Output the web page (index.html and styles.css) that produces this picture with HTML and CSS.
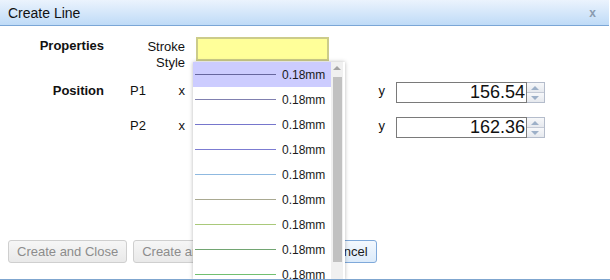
FILE: index.html
```html
<!DOCTYPE html>
<html lang="en">
<head>
    <meta charset="UTF-8">
    <title>Create Line</title>
    <link rel="stylesheet" href="styles.css">
</head>
<body>
    <div class="dialog">
        <div class="titlebar">
            <span class="title">Create Line</span>
            <span class="close">x</span>
        </div>

        <div class="content">
            <div class="form">
                <div class="section">Properties</div>
                <div class="label stroke-label">Stroke<br>Style</div>
                <div class="stroke-box"></div>

                <div class="section">Position</div>
                <div class="sub">P1</div>
                <div class="label">x</div>
                <div class="num-field"><span class="value"></span><span class="spin"><i class="up"></i><i class="down"></i></span></div>
                <div class="label">y</div>
                <div class="num-field"><span class="value">156.54</span><span class="spin"><i class="up"></i><i class="down"></i></span></div>

                <div class="sub">P2</div>
                <div class="label">x</div>
                <div class="num-field"><span class="value"></span><span class="spin"><i class="up"></i><i class="down"></i></span></div>
                <div class="label">y</div>
                <div class="num-field"><span class="value">162.36</span><span class="spin"><i class="up"></i><i class="down"></i></span></div>
            </div>
        </div>

        <div class="footer">
            <button class="btn" disabled>Create and Close</button>
            <button class="btn btn-wide" disabled>Create and Continue</button>
            <button class="btn btn-focus">Cancel</button>
        </div>

        <!-- stroke style list, opened over the form -->
        <div class="dropdown">
            <div class="item selected"><span class="stroke" style="border-color:#66669e"></span><span>0.18mm</span></div>
            <div class="item"><span class="stroke" style="border-color:#8080b0"></span><span>0.18mm</span></div>
            <div class="item"><span class="stroke" style="border-color:#7676cc"></span><span>0.18mm</span></div>
            <div class="item"><span class="stroke" style="border-color:#7c7cd2"></span><span>0.18mm</span></div>
            <div class="item"><span class="stroke" style="border-color:#8fb9e0"></span><span>0.18mm</span></div>
            <div class="item"><span class="stroke" style="border-color:#a9a991"></span><span>0.18mm</span></div>
            <div class="item"><span class="stroke" style="border-color:#a9c97a"></span><span>0.18mm</span></div>
            <div class="item"><span class="stroke" style="border-color:#72a572"></span><span>0.18mm</span></div>
            <div class="item"><span class="stroke" style="border-color:#72c070"></span><span>0.18mm</span></div>
            <div class="scrollbar">
                <span class="arrow"></span>
                <span class="thumb"></span>
            </div>
        </div>
    </div>
</body>
</html>
```

FILE: styles.css
```css
body {
    margin: 0;
    font-family: "Liberation Sans", Arial, sans-serif;
    font-size: 13px;
    color: #111;
    background-color: white;
    overflow: hidden;
}
.dialog {
    position: relative;
    height: 280px;
    display: flex;
    flex-direction: column;
    box-sizing: border-box;
    border-bottom: 1px solid #7fa6cf;
    overflow: hidden;
}
.titlebar {
    height: 25px;
    margin-right: 1px;
    display: flex;
    align-items: center;
    justify-content: space-between;
    padding: 0 13px 0 8px;
    background: linear-gradient(#ebf3fd, #bfdbf7);
    border-bottom: 1px solid #7aa6d6;
    box-sizing: content-box;
}
.title {
    font-size: 14px;
    color: #111;
}
.close {
    font-size: 12px;
    font-weight: bold;
    color: #8a9bb0;
}
.content {
    flex: 1;
    padding-top: 11px;
}
.form {
    display: grid;
    grid-template-columns: 104px 45px 14px 149px 29px 149px;
    grid-template-rows: 45px 35px 21px;
    column-gap: 11px;
    align-items: start;
}
.section {
    grid-column: 1;
    text-align: right;
    font-weight: bold;
    line-height: 16px;
    padding-top: 1px;
}
.sub {
    grid-column: 2;
    padding-left: 15px;
    line-height: 16px;
    padding-top: 1px;
}
.label {
    text-align: right;
    line-height: 16px;
    padding-top: 1px;
}
.stroke-label {
    grid-column: 2 / 4;
    padding-top: 2px;
}
.stroke-box {
    width: 133px;
    height: 24px;
    box-sizing: border-box;
    background-color: #ffff99;
    border: 2px solid #cccc8a;
}
.num-field {
    display: flex;
    height: 21px;
}
.value {
    width: 131px;
    box-sizing: border-box;
    border: 1px solid #7a7a7a;
    text-align: right;
    font-size: 18px;
    line-height: 19px;
    padding-right: 1px;
    color: #111;
}
.spin {
    width: 18px;
    display: flex;
    flex-direction: column;
    box-sizing: border-box;
    border: 1px solid #b4bccb;
    border-left: none;
}
.spin i {
    flex: 1;
    position: relative;
    background: linear-gradient(#f7f8fa, #e6e9ee);
}
.spin i.up {
    border-bottom: 1px solid #c4cad6;
}
.spin i::after {
    content: "";
    position: absolute;
    left: 4px;
    top: 3px;
    border-left: 4px solid transparent;
    border-right: 4px solid transparent;
}
.spin i.up::after {
    border-bottom: 4px solid #9db0c8;
}
.spin i.down::after {
    border-top: 4px solid #9db0c8;
}
.footer {
    display: flex;
    gap: 6px;
    padding: 0 8px 16px 8px;
}
.btn {
    height: 23px;
    padding: 0 8px;
    font-family: "Liberation Sans", Arial, sans-serif;
    font-size: 13px;
    color: #8c8c8c;
    background: linear-gradient(#f6f6f6, #e9e9e9);
    border: 1px solid #cfcfcf;
    border-radius: 3px;
}
.btn-wide {
    width: 179px;
    text-align: left;
}
.btn-focus {
    color: #1a1a1a;
    background: linear-gradient(#f3f8fe, #dcebfa);
    border-color: #7fa9da;
}
.dropdown {
    position: absolute;
    left: 193px;
    top: 62px;
    width: 152px;
    height: 218px;
    background-color: white;
    box-shadow: 0 0 4px rgba(0,0,0,0.28);
    overflow: hidden;
}
.item {
    display: flex;
    align-items: center;
    gap: 6px;
    width: 138px;
    height: 25px;
    padding-left: 2px;
    box-sizing: border-box;
    font-size: 12px;
    color: #1a1a1a;
}
.item.selected {
    background-color: #ccccff;
}
.stroke {
    width: 81px;
    height: 0;
    border-top: 1px solid #7777cc;
}
.scrollbar {
    position: absolute;
    top: 0;
    right: 2px;
    width: 12px;
    height: 100%;
    background-color: #f0f0f0;
}
.arrow {
    position: absolute;
    left: 2px;
    top: 4px;
    border-left: 4px solid transparent;
    border-right: 4px solid transparent;
    border-bottom: 4px solid #a3a3a3;
}
.thumb {
    position: absolute;
    left: 2px;
    top: 15px;
    width: 9px;
    height: 185px;
    background-color: #c1c1c1;
}
```
